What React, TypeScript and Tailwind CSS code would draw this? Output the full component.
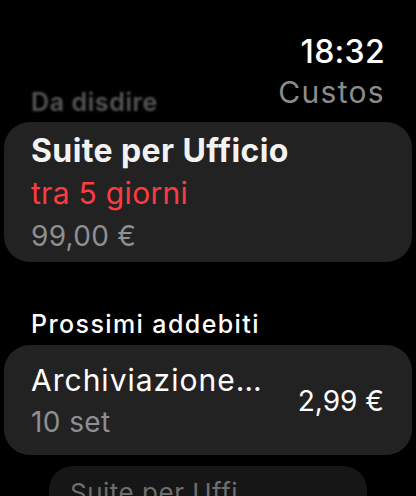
export default function App() {
  return (
    <div
      className="w-[416px] h-[496px] overflow-hidden bg-black text-white flex flex-col"
      style={{ fontFamily: 'Inter, "Noto Sans", sans-serif' }}
    >
      {/* Header */}
      <div className="shrink-0 h-[122px] flex items-start justify-between pl-[31px] pr-[31px] pt-[36px]">
        <div className="mt-[54px] text-[25px] font-semibold leading-[25px] tracking-[0.6px] text-[#565656] blur-[1.2px]">
          Da disdire
        </div>
        <div className="flex flex-col items-end">
          <span className="text-[32px] font-medium leading-[32px] tracking-[0.3px]">18:32</span>
          <span className="mt-[10px] text-[30px] leading-[28px] tracking-[1.3px] text-[#8c8c8c]">Custos</span>
        </div>
      </div>

      {/* To cancel */}
      <div className="shrink-0 mx-[4px] h-[140px] rounded-[26px] bg-[#222222] pl-[27px] pt-[7px] flex flex-col">
        <span className="text-[32px] font-bold leading-[43px] tracking-[0.4px] text-[#f2f2f2]">Suite per Ufficio</span>
        <span className="text-[30px] leading-[43px] tracking-[0.3px] text-[#ff3b40]">tra 5 giorni</span>
        <span className="text-[28px] leading-[42px] tracking-[0.3px] text-[#8e8e93]">99,00 €</span>
      </div>

      {/* Upcoming */}
      <div className="shrink-0 pl-[31px] mt-[47px] text-[25px] font-medium leading-[30px] tracking-[1.4px]">
        Prossimi addebiti
      </div>
      <div className="shrink-0 mx-[4px] mt-[6px] h-[110px] rounded-[26px] bg-[#222222] pl-[27px] pr-[28px] flex items-center justify-between">
        <div className="flex flex-col">
          <span className="text-[30px] leading-[43px] tracking-[1px]">Archiviazione…</span>
          <span className="text-[28px] leading-[40px] tracking-[0.4px] text-[#8e8e93]">10 set</span>
        </div>
        <span className="text-[28px] leading-[28px] mt-[2px]">2,99 €</span>
      </div>

      <div className="shrink-0 mx-[49px] mt-[11px] h-[60px] rounded-[24px] bg-[#161616] pl-[21px] pt-[14px]">
        <span className="text-[26px] leading-[26px] tracking-[0.5px] text-[#6e6e6e]">Suite per Uffi</span>
      </div>
    </div>
  );
}
